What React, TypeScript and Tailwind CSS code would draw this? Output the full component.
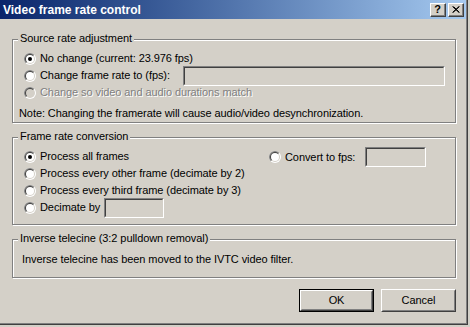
import React from "react";

const FONT = "font-['Liberation_Sans',Arial,sans-serif]";

function Radio({ checked = false, disabled = false }: { checked?: boolean; disabled?: boolean }) {
  return (
    <svg width="12" height="12" viewBox="0 0 12 12" className="shrink-0">
      <circle cx="6" cy="6" r="6" fill="#ffffff" />
      <path d="M1.757 10.243 A6 6 0 0 1 10.243 1.757 Z" fill="#808080" />
      <circle cx="6" cy="6" r="5" fill="#d4d0c8" />
      <path d="M2.464 9.536 A5 5 0 0 1 9.536 2.464 Z" fill="#404040" />
      <circle cx="6" cy="6" r="4" fill={disabled ? "#d4d0c8" : "#ffffff"} />
      {checked && <circle cx="6" cy="6" r="2" fill="#000000" />}
    </svg>
  );
}

function Edit({ className }: { className: string }) {
  return (
    <div className={`shrink-0 border border-t-[#808080] border-l-[#808080] border-b-white border-r-white ${className}`}>
      <div className="h-full w-full border border-t-[#404040] border-l-[#404040] border-b-[#d4d0c8] border-r-[#d4d0c8] bg-[#d4d0c8]" />
    </div>
  );
}

function Option({ label, checked, disabled }: { label: string; checked?: boolean; disabled?: boolean }) {
  return (
    <div className="flex h-[17px] items-center gap-[4px] whitespace-nowrap">
      <Radio checked={checked} disabled={disabled} />
      <span className={disabled ? "text-[#808080] [text-shadow:1px_1px_0_#fff]" : ""}>{label}</span>
    </div>
  );
}

function Group({ title, className, children }: { title: string; className: string; children: React.ReactNode }) {
  return (
    <div
      className={`relative ml-[12px] w-[444px] border border-[#808080] shadow-[inset_1px_1px_0_#fff,1px_1px_0_#fff] ${className}`}
    >
      <span className="absolute left-[5px] top-[-8px] h-[13px] whitespace-nowrap bg-[#d4d0c8] px-[2px] leading-[13px]">
        {title}
      </span>
      {children}
    </div>
  );
}

function Button({ label, isDefault }: { label: string; isDefault?: boolean }) {
  return (
    <div className={`h-[23px] w-[75px] ${isDefault ? "border border-black" : ""}`}>
      <div className="h-full w-full border border-t-white border-l-white border-b-[#404040] border-r-[#404040]">
        <div className="flex h-full w-full items-center justify-center border border-t-[#d4d0c8] border-l-[#d4d0c8] border-b-[#808080] border-r-[#808080]">
          {label}
        </div>
      </div>
    </div>
  );
}

function CaptionButton({ children }: { children: React.ReactNode }) {
  return (
    <div className="h-[14px] w-[16px] border border-t-white border-l-white border-b-[#404040] border-r-[#404040] bg-[#d4d0c8]">
      <div className="flex h-full w-full items-center justify-center border-b border-r border-[#808080] text-[11px] font-bold leading-none text-black">
        {children}
      </div>
    </div>
  );
}

export default function App() {
  return (
    <div className={`h-[327px] w-[470px] overflow-hidden bg-[#d4d0c8] text-[11px] tracking-[-0.08px] text-black ${FONT}`}>
      <div className="w-[468px] border-b border-r border-[#404040]">
        <div className="w-[467px] border-b border-r border-[#808080]">
          {/* caption */}
          <div className="flex h-[19px] items-start bg-gradient-to-r from-[#0a246a] to-[#a6caf0] pr-[2px] pt-[3px]">
            <span className="pl-[3px] pt-[1px] text-[12px] font-bold leading-[13px] tracking-normal text-white">
              Video frame rate control
            </span>
            <div className="ml-auto flex gap-[2px]">
              <CaptionButton>?</CaptionButton>
              <CaptionButton>
                <svg width="8" height="7" viewBox="0 0 8 7">
                  <path d="M0.5 0.5 L7 6.5 M1.5 0.5 L7.5 6.5 M7 0.5 L0.5 6.5 M7.5 0.5 L1 6.5" stroke="#000" strokeWidth="1" />
                </svg>
              </CaptionButton>
            </div>
          </div>

          {/* client area */}
          <div className="flex h-[304px] flex-col">
            <Group title="Source rate adjustment" className="mt-[20px] h-[84px] pl-[11px] pr-[10px] pt-[10px]">
              <Option label="No change (current: 23.976 fps)" checked />
              <div className="flex h-[17px] items-center">
                <Option label="Change frame rate to (fps):" />
                <Edit className="ml-auto h-[20px] w-[262px]" />
              </div>
              <Option label="Change so video and audio durations match" disabled />
              <div className="-ml-[5px] mt-[4px] flex h-[17px] items-center whitespace-nowrap">
                Note: Changing the framerate will cause audio/video desynchronization.
              </div>
            </Group>

            <Group title="Frame rate conversion" className="mt-[14px] flex h-[88px] pl-[11px] pt-[10px]">
              <div className="w-[245px] shrink-0">
                <Option label="Process all frames" checked />
                <Option label="Process every other frame (decimate by 2)" />
                <Option label="Process every third frame (decimate by 3)" />
                <div className="flex h-[17px] items-center gap-[4px] whitespace-nowrap">
                  <Radio />
                  <span className="w-[60px] shrink-0">Decimate by</span>
                  <Edit className="h-[20px] w-[60px]" />
                </div>
              </div>
              <div className="flex h-[18px] items-center gap-[4px] whitespace-nowrap">
                <Radio />
                <span className="w-[76px] shrink-0">Convert to fps:</span>
                <Edit className="h-[20px] w-[61px]" />
              </div>
            </Group>

            <Group title="Inverse telecine (3:2 pulldown removal)" className="mt-[14px] h-[39px] pl-[9px] pt-[12px]">
              <div className="flex h-[14px] items-center whitespace-nowrap">
                Inverse telecine has been moved to the IVTC video filter.
              </div>
            </Group>

            <div className="mt-[11px] flex justify-end gap-[7px] pr-[10px]">
              <Button label="OK" isDefault />
              <Button label="Cancel" />
            </div>
          </div>
        </div>
      </div>
    </div>
  );
}
